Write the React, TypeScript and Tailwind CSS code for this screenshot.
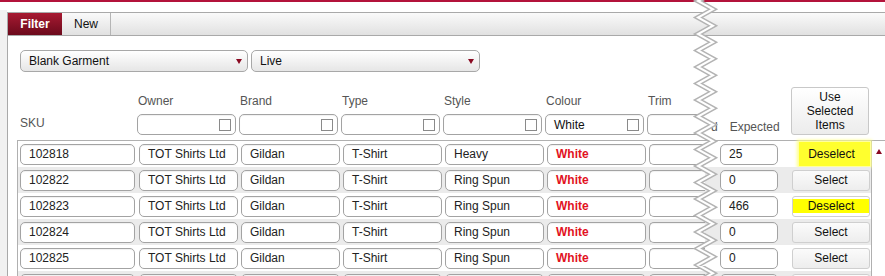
import React from "react";

type Row = { sku: string; style: string; exp: string; sel: "focus" | "band" | "none" };

const rows: Row[] = [
  { sku: "102818", style: "Heavy", exp: "25", sel: "focus" },
  { sku: "102822", style: "Ring Spun", exp: "0", sel: "none" },
  { sku: "102823", style: "Ring Spun", exp: "466", sel: "band" },
  { sku: "102824", style: "Ring Spun", exp: "0", sel: "none" },
  { sku: "102825", style: "Ring Spun", exp: "0", sel: "none" },
];

function Box({ className = "", children }: { className?: string; children?: React.ReactNode }) {
  return (
    <div
      className={
        "h-[21px] shrink-0 rounded-[5px] border border-[#a3a3a3] bg-white pl-[8px] flex items-center whitespace-nowrap overflow-hidden shadow-[inset_0_1px_1px_rgba(0,0,0,0.06)] " +
        className
      }
    >
      {children}
    </div>
  );
}

function Check() {
  return <div className="ml-auto mr-[4px] h-[12px] w-[12px] shrink-0 border border-[#8a8a8a] bg-white" />;
}

function Select({ label, w }: { label: string; w: string }) {
  return (
    <div
      className={
        "h-[22px] rounded-[5px] border border-[#a8a8a8] bg-gradient-to-b from-white to-[#e6e6e6] flex items-center pl-[8px] pr-[5px] text-[#111] " +
        w
      }
    >
      <span>{label}</span>
      <span className="ml-auto h-0 w-0 border-l-[3px] border-r-[3px] border-t-[5px] border-l-transparent border-r-transparent border-t-[#8a0a22]" />
    </div>
  );
}

function Zigzag() {
  const pts: string[] = [];
  for (let k = -1; k < 20; k++) {
    const y = 1 + 16.5 * k;
    pts.push(`8,${y}`);
    pts.push(`23,${y + 8.25}`);
  }
  const p = pts.join(" ");
  return (
    <svg className="absolute left-[690px] top-0" width="30" height="276" viewBox="0 0 30 276">
      <polyline points={p} fill="none" stroke="#b3b3b3" strokeWidth="5" strokeLinejoin="miter" />
      <polyline points={p} fill="none" stroke="#ffffff" strokeWidth="2" strokeLinejoin="miter" />
    </svg>
  );
}

export default function App() {
  const filterCols = ["Owner", "Brand", "Type", "Style", "Colour"];
  return (
    <div className="relative h-[276px] w-[885px] overflow-hidden bg-white font-['Liberation_Sans',Arial,sans-serif] text-[12px] leading-[14px] text-[#222]">
      <div className="h-[2px] bg-[#b3133b]" />
      <div className="flex h-[274px]">
        <div className="mt-[8px] w-[7px] shrink-0 bg-[#f1f1f1]" />
        <div className="mt-[10px] flex flex-1 flex-col border-l border-[#a9a9a9]">
          {/* tab bar */}
          <div className="flex h-[24px] shrink-0 border-t border-b border-[#a9a9a9] bg-gradient-to-b from-[#fafafa] to-[#e1e1e1]">
            <div className="flex w-[54px] items-center justify-center bg-gradient-to-b from-[#a81a32] to-[#6c0a1c] font-bold text-white">
              Filter
            </div>
            <div className="flex w-[49px] items-center justify-center border-r border-[#b5b5b5] text-[#111]">New</div>
          </div>

          <div className="flex flex-col pl-[12px]">
            {/* selects */}
            <div className="mt-[14px] flex gap-[3px]">
              <Select label="Blank Garment" w="w-[228px]" />
              <Select label="Live" w="w-[229px]" />
            </div>

            {/* header */}
            <div className="mt-[15px] flex h-[48px] items-end">
              <div className="flex h-[21px] w-[115px] shrink-0 items-center pb-[3px] text-[#555]">SKU</div>
              <div className="ml-[2px] flex">
                {filterCols.map((c) => (
                  <div key={c} className="mr-[3px] flex w-[99px] shrink-0 flex-col">
                    <div className="mb-[6px] pl-[1px] text-[#555]">{c}</div>
                    <Box className="pr-0">
                      {c === "Colour" ? <span className="text-[#111]">White</span> : null}
                      <Check />
                    </Box>
                  </div>
                ))}
                <div className="flex w-[58px] shrink-0 flex-col">
                  <div className="mb-[6px] pl-[1px] text-[#555]">Trim</div>
                  <Box className="rounded-r-none border-r-0" />
                </div>
              </div>
              <div className="flex h-[21px] w-[86px] shrink-0 items-center pt-[4px] text-[#555]">
                <span className="ml-[6px]">d</span>
                <span className="ml-[12px]">Expected</span>
              </div>
              <div className="flex h-[48px] w-[78px] shrink-0 flex-col items-center justify-center rounded-[3px] border border-[#c8c8c8] bg-gradient-to-b from-white to-[#ececec] text-center text-[#111]">
                <span>Use</span>
                <span>Selected</span>
                <span>Items</span>
              </div>
            </div>

            {/* table */}
            <div className="-ml-[3px] mt-[5px] flex border-t border-[#b0b0b0]">
              <div className="flex w-[855px] shrink-0 flex-col border-l border-r border-[#b0b0b0]">
                {rows.map((r, i) => (
                  <div
                    key={r.sku}
                    className={"flex h-[26px] shrink-0 items-center pl-[2px] " + (i % 2 === 1 ? "bg-[#ebebeb]" : "bg-white")}
                  >
                    <Box className="w-[115px]">{r.sku}</Box>
                    <Box className="ml-[4px] w-[99px]">TOT Shirts Ltd</Box>
                    <Box className="ml-[3px] w-[99px]">Gildan</Box>
                    <Box className="ml-[3px] w-[99px]">T-Shirt</Box>
                    <Box className="ml-[3px] w-[99px]">{r.style}</Box>
                    <Box className="ml-[3px] w-[99px] font-bold text-[#e2121e]">White</Box>
                    <Box className="ml-[3px] w-[56px] rounded-r-none border-r-0" />
                    <Box className="ml-[15px] w-[58px]">{r.exp}</Box>
                    {r.sel === "focus" ? (
                      <div className="ml-[21px] flex h-[24px] w-[71px] shrink-0 items-center justify-center bg-[#ffff2e] pr-[6px] text-[#111] shadow-[0_0_3px_2px_#ffff8a]">
                        Deselect
                      </div>
                    ) : r.sel === "band" ? (
                      <div className="ml-[14px] flex h-[21px] w-[78px] shrink-0 items-center rounded-[3px] border border-[#cfcfcf] bg-white">
                        <div className="flex h-[14px] w-full items-center justify-center bg-[#ffff00] text-[#111]">Deselect</div>
                      </div>
                    ) : (
                      <div className="ml-[14px] flex h-[21px] w-[78px] shrink-0 items-center justify-center rounded-[3px] border border-[#cfcfcf] bg-gradient-to-b from-[#fbfbfb] to-[#ededed] text-[#111]">
                        Select
                      </div>
                    )}
                  </div>
                ))}
                {/* partially visible next row */}
                <div className="flex h-[26px] shrink-0 items-center bg-[#ebebeb] pl-[2px]">
                  <Box className="w-[115px]" />
                  <Box className="ml-[4px] w-[99px]" />
                  <Box className="ml-[3px] w-[99px]" />
                  <Box className="ml-[3px] w-[99px]" />
                  <Box className="ml-[3px] w-[99px]" />
                  <Box className="ml-[3px] w-[99px]" />
                  <Box className="ml-[3px] w-[56px] rounded-r-none border-r-0" />
                  <Box className="ml-[15px] w-[58px]" />
                  <div className="ml-[14px] h-[21px] w-[78px] shrink-0 rounded-[3px] border border-[#cfcfcf] bg-[#fbfbfb]" />
                </div>
              </div>
              <div className="flex w-[12px] shrink-0 flex-col bg-white">
                <span className="ml-[4px] mt-[8px] h-0 w-0 border-l-[3px] border-r-[3px] border-b-[5px] border-l-transparent border-r-transparent border-b-[#8a0a22]" />
              </div>
            </div>
          </div>
        </div>
      </div>
      <Zigzag />
    </div>
  );
}
